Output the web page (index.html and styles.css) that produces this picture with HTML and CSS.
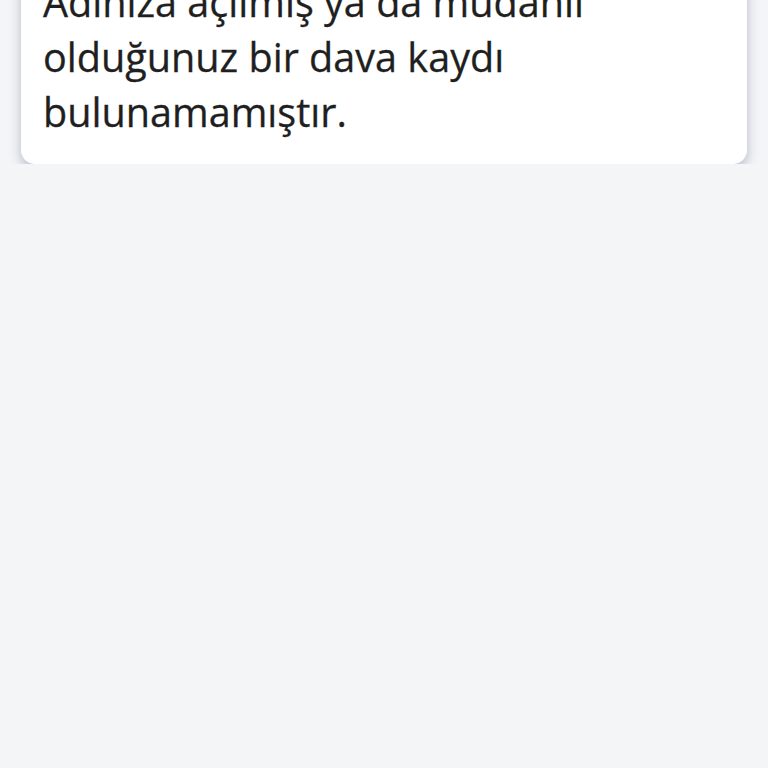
FILE: index.html
```html
<!DOCTYPE html>
<html lang="tr">

<head>
    <meta charset="UTF-8">
    <meta name="viewport" content="width=device-width, initial-scale=1.0">
    <title>Davalarım</title>

    <link rel="stylesheet" href="styles.css">
</head>

<body>

    <div class="page">
        <div class="card">
            <p class="message">Adınıza açılmış ya da müdahil olduğunuz bir dava kaydı bulunamamıştır.</p>
        </div>
    </div>

</body>

</html>
```

FILE: styles.css
```css
body {
    margin: 0;
    background-color: #f4f5f7;
    font-family: "Open Sans", Lato, sans-serif;
    color: #1f1f1f;
}

.page {
    padding: 0 21px;
}

.card {
    margin-top: -60px;
    padding: 35px 22px 24px;
    background-color: #ffffff;
    border-radius: 14px;
    box-shadow: 0 5px 12px rgba(100, 104, 135, .42);
}

.message {
    margin: 0;
    width: 620px;
    font-size: 39.6px;
    line-height: 55px;
    -webkit-text-stroke: .3px #1f1f1f;
}
```
